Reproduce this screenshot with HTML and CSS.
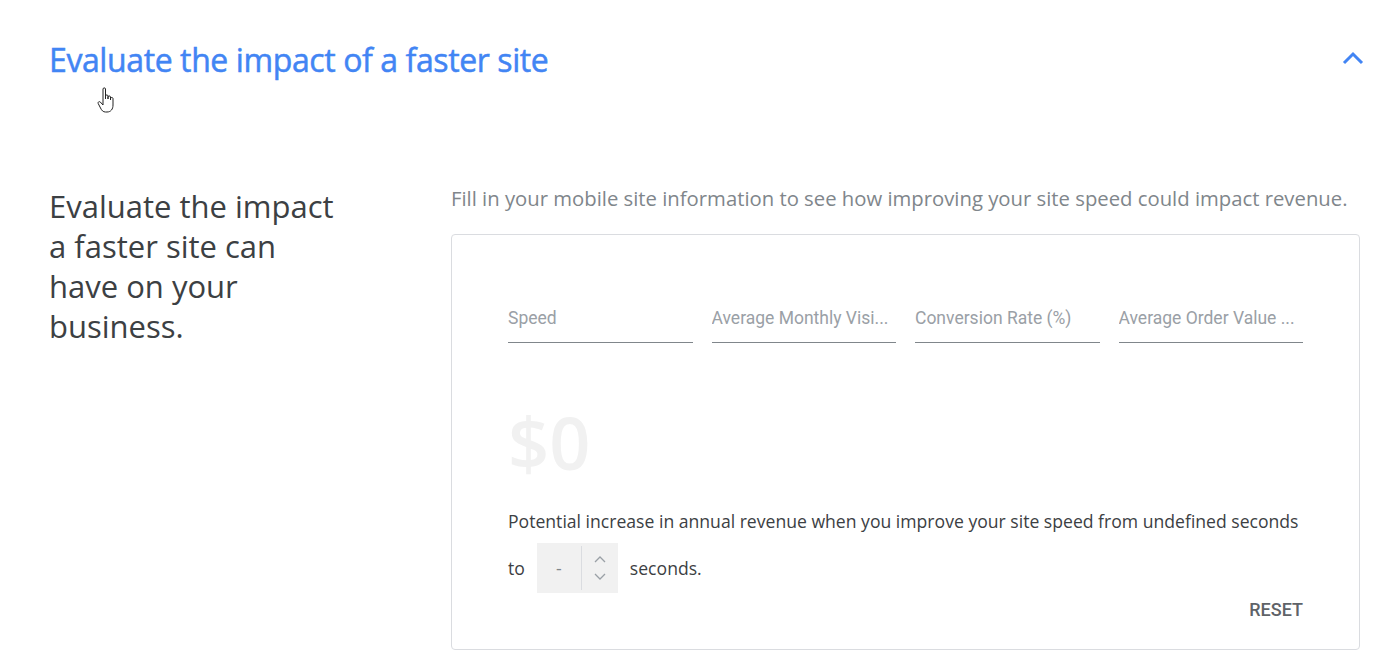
FILE: index.html
```html
<!DOCTYPE html>
<html lang="en">
<head>
  <meta charset="UTF-8">
  <meta name="viewport" content="width=device-width, initial-scale=1.0">
  <title>Evaluate the impact of a faster site</title>
  <link rel="stylesheet" href="styles.css">
</head>
<body>

  <section class="panel">
    <div class="panel-head">
      <h1>Evaluate the impact of a faster site</h1>
      <svg class="chevron" width="24" height="16" viewBox="0 0 24 16">
        <path d="M3 13 L12 4 L21 13" fill="none" stroke="#4285f4" stroke-width="3"/>
      </svg>
      <!-- mouse pointer captured in the shot -->
      <svg class="pointer" width="22" height="30" viewBox="0 0 22 30">
        <path d="M6 3 C6 1.5 8.5 1.5 8.5 3 L8.5 13 L8.5 10 C8.5 8.6 11 8.6 11 10 L11 13 L11 11 C11 9.6 13.5 9.6 13.5 11 L13.5 14 L13.5 12.5 C13.5 11.2 16 11.2 16 12.5 L16 19 C16 23 14 26 10 26 L8.5 26 C6 26 4.8 24.5 3.5 22 L1.2 17.5 C0.6 16.2 2.2 15 3.3 16 L6 19 Z" fill="#fff" stroke="#222" stroke-width="1"/>
      </svg>
    </div>

    <div class="panel-body">
      <p class="lead">Evaluate the impact a faster site can have on your business.</p>

      <div class="calc">
        <p class="hint">Fill in your mobile site information to see how improving your site speed could impact revenue.</p>
        <div class="card">
          <div class="fields">
            <input type="text" placeholder="Speed">
            <input type="text" placeholder="Average Monthly Visi...">
            <input type="text" placeholder="Conversion Rate (%)">
            <input type="text" placeholder="Average Order Value ...">
          </div>

          <div class="amount">$0</div>

          <p class="result">Potential increase in annual revenue when you improve your site speed from undefined seconds</p>
          <div class="target">
            <span>to</span>
            <div class="stepper">
              <span class="value">-</span>
              <div class="arrows">
                <svg width="14" height="9" viewBox="0 0 14 9"><path d="M2 7 L7 2 L12 7" fill="none" stroke="#9aa0a6" stroke-width="1.3"/></svg>
                <svg width="14" height="9" viewBox="0 0 14 9"><path d="M2 2 L7 7 L12 2" fill="none" stroke="#9aa0a6" stroke-width="1.3"/></svg>
              </div>
            </div>
            <span>seconds.</span>
          </div>

          <div class="actions">
            <button type="button">RESET</button>
          </div>
        </div>
      </div>
    </div>
  </section>

</body>
</html>
```

FILE: styles.css
```css
/* Global styles */
* {
  margin: 0;
  padding: 0;
  box-sizing: border-box;
}

body {
  background: #fff;
  font-family: 'Open Sans', 'Roboto', sans-serif;
  color: #3c4043;
}

.panel {
  padding: 36px 40px 0 49px;
}

/* Header */
.panel-head {
  position: relative;
  display: flex;
  justify-content: space-between;
  align-items: center;
  height: 46px;
}

.panel-head h1 {
  font-size: 32px;
  font-weight: 500;
  color: #4285f4;
  letter-spacing: -0.4px;
  -webkit-text-stroke: 0.5px #4285f4;
}

.chevron {
  margin-top: -3px;
  margin-right: -5px;
}

.pointer {
  position: absolute;
  left: 48px;
  top: 50px;
}

/* Body */
.panel-body {
  display: flex;
  margin-top: 104px;
}

.lead {
  width: 402px;
  padding-right: 110px;
  font-size: 31px;
  line-height: 40px;
}

.calc {
  flex: 1;
}

.hint {
  font-size: 20.3px;
  color: #80868b;
  line-height: 24px;
  margin-bottom: 24px;
}

.card {
  border: 1px solid #dadce0;
  border-radius: 4px;
  padding: 71px 56px 29px 56px;
}

.fields {
  display: grid;
  grid-template-columns: repeat(4, 1fr);
  gap: 19px;
}

.fields input {
  border: none;
  border-bottom: 1px solid #80868b;
  font-family: 'Roboto', sans-serif;
  font-size: 17.5px;
  padding: 2px 0 14px;
  color: #3c4043;
  outline: none;
  min-width: 0;
}

.fields input::placeholder {
  color: #9aa0a6;
}

.amount {
  font-size: 72px;
  font-weight: 600;
  color: #f1f1f1;
  margin-top: 54px;
  line-height: 90px;
}

.result {
  font-size: 17.6px;
  line-height: 24px;
  margin-top: 22px;
  white-space: nowrap;
}

.target {
  display: flex;
  align-items: center;
  gap: 12px;
  font-size: 17.6px;
  margin-top: 10px;
}

.stepper {
  display: flex;
  align-items: center;
  background: #f1f1f1;
  height: 50px;
  width: 81px;
}

.stepper .value {
  width: 44px;
  text-align: center;
  color: #80868b;
}

.stepper .arrows {
  display: flex;
  flex-direction: column;
  align-items: center;
  justify-content: center;
  gap: 8px;
  height: 44px;
  border-left: 1px solid #dadce0;
  flex: 1;
}

.actions {
  display: flex;
  justify-content: flex-end;
  margin-top: 6px;
}

.actions button {
  border: none;
  background: none;
  font-family: 'Roboto', sans-serif;
  font-size: 18px;
  font-weight: 500;
  color: #5f6368;
  cursor: pointer;
}
```
